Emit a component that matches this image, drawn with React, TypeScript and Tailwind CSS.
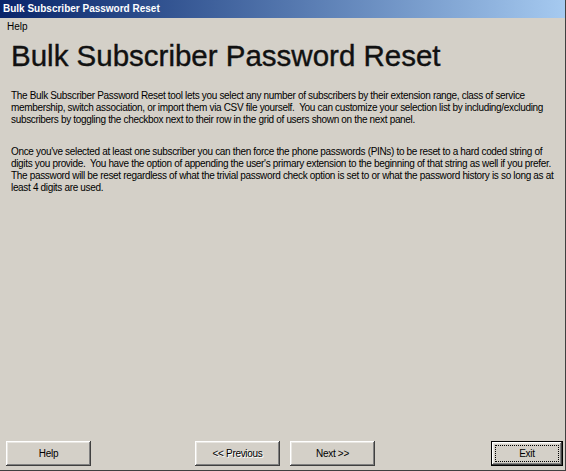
export default function App() {
  const btn =
    'h-[25px] bg-[#d4d0c8] text-[10px] tracking-[-0.3px] text-black flex items-center justify-center shadow-[inset_-1px_-1px_#404040,inset_1px_1px_#ffffff,inset_-2px_-2px_#808080,inset_2px_2px_#e8e6e1]';

  return (
    <div className="w-[566px] h-[471px] bg-[#d4d0c8] flex flex-col border-r border-b border-[#404040] font-['Liberation_Sans',Arial,sans-serif] overflow-hidden">
      {/* title bar */}
      <div className="h-[18px] shrink-0 flex items-center pl-[3px] bg-gradient-to-r from-[#0a246a] to-[#a6caf0]">
        <span className="text-white text-[10px] font-bold leading-none">Bulk Subscriber Password Reset</span>
      </div>

      {/* menu */}
      <div className="h-[16px] shrink-0 flex items-center pl-[7px] text-[10px] text-black">Help</div>

      {/* content */}
      <div className="flex-1 pl-[11px] pr-[4px]">
        <h1 className="text-[29.5px] leading-none mt-[7px] text-[#111] [-webkit-text-stroke:0.4px_#111]">Bulk Subscriber Password Reset</h1>

        <div className="mt-[19px] text-[10px] leading-[12px] tracking-[-0.33px] text-black whitespace-nowrap">
          <p>The Bulk Subscriber Password Reset tool lets you select any number of subscribers by their extension range, class of service</p>
          <p>membership, switch association, or import them via CSV file yourself.&nbsp; You can customize your selection list by including/excluding</p>
          <p>subscribers by toggling the checkbox next to their row in the grid of users shown on the next panel.</p>
        </div>

        <div className="mt-[20px] text-[10px] leading-[12px] tracking-[-0.33px] text-black whitespace-nowrap">
          <p>Once you've selected at least one subscriber you can then force the phone passwords (PINs) to be reset to a hard coded string of</p>
          <p>digits you provide.&nbsp; You have the option of appending the user's primary extension to the beginning of that string as well if you prefer.</p>
          <p>The password will be reset regardless of what the trivial password check option is set to or what the password history is so long as at</p>
          <p>least 4 digits are used.</p>
        </div>
      </div>

      {/* buttons */}
      <div className="h-[25px] shrink-0 mb-[4px] flex items-start pl-[6px] pr-[2px]">
        <div className={`${btn} w-[85px]`}>Help</div>
        <div className={`${btn} w-[85px] ml-[104px] text-[#808080] [text-shadow:1px_1px_#ffffff]`}>&lt;&lt; Previous</div>
        <div className={`${btn} w-[85px] ml-[10px]`}>Next &gt;&gt;</div>
        <div className="ml-auto w-[72px] h-[25px] border border-black">
          <div className={`${btn} w-full h-full relative`}>
            <div className="absolute inset-[3px] border border-dotted border-black" />
            Exit
          </div>
        </div>
      </div>
    </div>
  );
}
